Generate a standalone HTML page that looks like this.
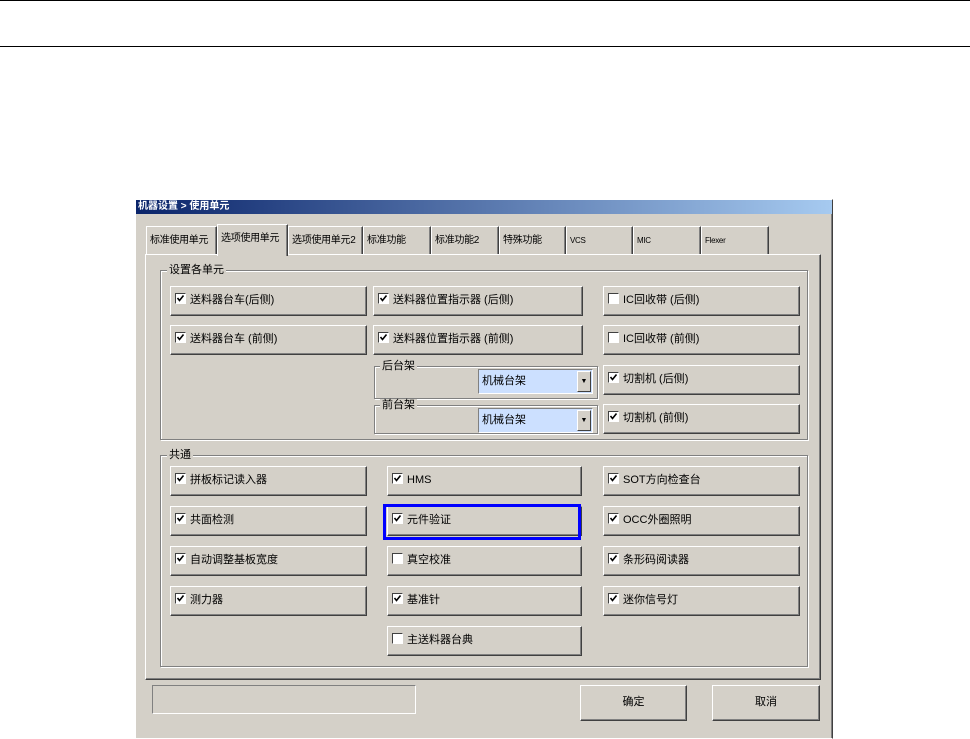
<!DOCTYPE html>
<html><head><meta charset="utf-8"><style>
*{box-sizing:border-box;margin:0;padding:0}
body{width:970px;height:728px;background:#fff;position:relative;overflow:hidden;font-family:"Liberation Sans","Noto Sans CJK SC",sans-serif;font-size:11px;color:#000}
.a{position:absolute}
.hl{position:absolute;left:0;width:970px;height:1px;background:#000}
.win{left:135px;top:199px;width:698px;height:540px;background:#d4d0c8;border:1px solid #fff;border-right-color:#404040;box-shadow:inset -1px 0 #808080}
.title{left:136px;top:200px;width:696px;height:14px;background:linear-gradient(90deg,#0a246a,#a6caf0);color:#fff;font-weight:bold;font-size:10px;line-height:14px;padding-left:2px;white-space:nowrap}
.tab{position:absolute;top:226px;height:29px;border:1px solid #fff;border-bottom:none;border-right-color:#404040;background:#d4d0c8;font-size:10px;line-height:28px;padding-left:3px;box-shadow:inset -1px 0 #808080;white-space:nowrap;overflow:hidden;letter-spacing:-0.3px}
.tab.sel{top:224px;height:32px;z-index:3}
.panel{left:145px;top:254px;width:676px;height:426px;border:1px solid #fff;border-right-color:#404040;border-bottom-color:#404040;box-shadow:inset -1px -1px #808080}
.grp{position:absolute;border:1px solid #808080;box-shadow:1px 1px #fff,inset 1px 1px #fff}
.gl{position:absolute;background:#d4d0c8;padding:0 2px;font-size:11px;line-height:12px;white-space:nowrap}
.btn{position:absolute;height:30px;background:#d4d0c8;border:1px solid #fff;border-right-color:#404040;border-bottom-color:#404040;box-shadow:inset -1px -1px #808080;font-size:11px;line-height:27px;padding-left:4px;white-space:nowrap}
.cb{display:inline-block;width:11px;height:11px;background:#fff;border:1px solid #404040;border-right-color:#fff;border-bottom-color:#fff;vertical-align:-1px;margin-right:4px;position:relative}
.cb svg{position:absolute;left:0;top:0}
.combo{position:absolute;height:25px;width:115px;border:1px solid #808080;border-right-color:#fff;border-bottom-color:#fff;background:#cce0ff;line-height:22px;padding-left:3px}
.combo .ar{position:absolute;right:1px;top:1px;width:14px;height:21px;background:#d4d0c8;border:1px solid #fff;border-right-color:#404040;border-bottom-color:#404040;font-size:7px;text-align:center;line-height:19px}
</style></head><body>
<svg width="0" height="0" style="position:absolute"><defs><symbol id="ck" viewBox="0 0 9 9"><path d="M1.5 4 L3.5 6.5 L7.5 1.5" stroke="#000" stroke-width="1.6" fill="none"/></symbol></defs></svg>
<div class="hl" style="top:0"></div>
<div class="hl" style="top:46px"></div>
<div class="a win"></div>
<div class="a title">机器设置 &gt; 使用单元</div>
<div class="tab" style="left:146px;width:71px">标准使用单元</div>
<div class="tab sel" style="left:217px;width:71px">选项使用单元</div>
<div class="tab" style="left:288px;width:75px">选项使用单元2</div>
<div class="tab" style="left:363px;width:68px">标准功能</div>
<div class="tab" style="left:431px;width:68px">标准功能2</div>
<div class="tab" style="left:499px;width:67px">特殊功能</div>
<div class="tab" style="left:566px;width:67px;font-size:8px">VCS</div>
<div class="tab" style="left:633px;width:68px;font-size:8px">MIC</div>
<div class="tab" style="left:701px;width:68px;font-size:8px">Flexer</div>
<div class="a panel"></div>
<div class="grp" style="left:160px;top:270px;width:648px;height:170px"></div>
<div class="gl" style="left:167px;top:264px">设置各单元</div>
<div class="btn" style="left:170px;top:286px;width:197px"><span class="cb"><svg width="9" height="9"><use href="#ck"/></svg></span>送料器台车(后侧)</div>
<div class="btn" style="left:373px;top:286px;width:210px"><span class="cb"><svg width="9" height="9"><use href="#ck"/></svg></span>送料器位置指示器 (后侧)</div>
<div class="btn" style="left:603px;top:286px;width:197px"><span class="cb"></span>IC回收带 (后侧)</div>
<div class="btn" style="left:170px;top:325px;width:197px"><span class="cb"><svg width="9" height="9"><use href="#ck"/></svg></span>送料器台车 (前侧)</div>
<div class="btn" style="left:373px;top:325px;width:210px"><span class="cb"><svg width="9" height="9"><use href="#ck"/></svg></span>送料器位置指示器 (前侧)</div>
<div class="btn" style="left:603px;top:325px;width:197px"><span class="cb"></span>IC回收带 (前侧)</div>
<div class="grp" style="left:374px;top:366px;width:224px;height:33px"></div>
<div class="gl" style="left:380px;top:360px">后台架</div>
<div class="combo" style="left:478px;top:369px">机械台架<div class="ar">▼</div></div>
<div class="grp" style="left:374px;top:405px;width:224px;height:29px"></div>
<div class="gl" style="left:380px;top:399px">前台架</div>
<div class="combo" style="left:478px;top:408px">机械台架<div class="ar">▼</div></div>
<div class="btn" style="left:603px;top:365px;width:197px"><span class="cb"><svg width="9" height="9"><use href="#ck"/></svg></span>切割机 (后侧)</div>
<div class="btn" style="left:603px;top:404px;width:197px"><span class="cb"><svg width="9" height="9"><use href="#ck"/></svg></span>切割机 (前侧)</div>
<div class="grp" style="left:160px;top:455px;width:648px;height:212px"></div>
<div class="gl" style="left:167px;top:449px">共通</div>
<div class="btn" style="left:170px;top:466px;width:197px"><span class="cb"><svg width="9" height="9"><use href="#ck"/></svg></span>拼板标记读入器</div>
<div class="btn" style="left:387px;top:466px;width:195px"><span class="cb"><svg width="9" height="9"><use href="#ck"/></svg></span>HMS</div>
<div class="btn" style="left:603px;top:466px;width:197px"><span class="cb"><svg width="9" height="9"><use href="#ck"/></svg></span>SOT方向检查台</div>
<div class="btn" style="left:170px;top:506px;width:197px"><span class="cb"><svg width="9" height="9"><use href="#ck"/></svg></span>共面检测</div>
<div class="btn" style="left:387px;top:506px;width:195px"><span class="cb"><svg width="9" height="9"><use href="#ck"/></svg></span>元件验证</div>
<div class="btn" style="left:603px;top:506px;width:197px"><span class="cb"><svg width="9" height="9"><use href="#ck"/></svg></span>OCC外圈照明</div>
<div class="btn" style="left:170px;top:546px;width:197px"><span class="cb"><svg width="9" height="9"><use href="#ck"/></svg></span>自动调整基板宽度</div>
<div class="btn" style="left:387px;top:546px;width:195px"><span class="cb"></span>真空校准</div>
<div class="btn" style="left:603px;top:546px;width:197px"><span class="cb"><svg width="9" height="9"><use href="#ck"/></svg></span>条形码阅读器</div>
<div class="btn" style="left:170px;top:586px;width:197px"><span class="cb"><svg width="9" height="9"><use href="#ck"/></svg></span>测力器</div>
<div class="btn" style="left:387px;top:586px;width:195px"><span class="cb"><svg width="9" height="9"><use href="#ck"/></svg></span>基准针</div>
<div class="btn" style="left:603px;top:586px;width:197px"><span class="cb"><svg width="9" height="9"><use href="#ck"/></svg></span>迷你信号灯</div>
<div class="btn" style="left:387px;top:626px;width:195px"><span class="cb"></span>主送料器台典</div>
<div class="a" style="left:383px;top:504px;width:198px;height:36px;border:3px solid #0000ff"></div>
<div class="a" style="left:152px;top:685px;width:264px;height:29px;border:1px solid #808080;border-right-color:#fff;border-bottom-color:#fff"></div>
<div class="btn" style="left:580px;top:685px;width:107px;height:36px;line-height:33px;text-align:center;padding:0">确定</div>
<div class="btn" style="left:712px;top:685px;width:108px;height:36px;line-height:33px;text-align:center;padding:0">取消</div>
</body></html>
